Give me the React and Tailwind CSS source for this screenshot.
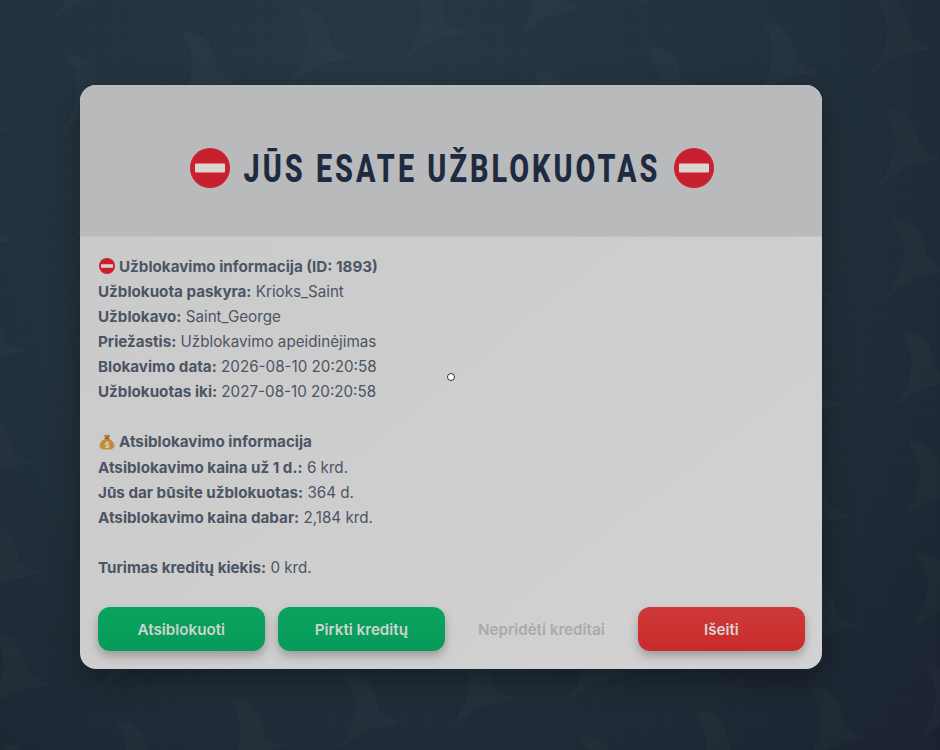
import React from 'react';

const NoEntry = ({ className }) => (
  <svg className={className} viewBox="0 0 40 40">
    <circle cx="20" cy="20" r="20" fill="#c9202f" />
    <rect x="5" y="15.5" width="30" height="9" rx="1" fill="#d9d6d2" />
  </svg>
);

const MoneyBag = ({ className }) => (
  <svg className={className} viewBox="0 0 16 16">
    <path d="M5 .8c1 .6 1.600.2 3 .2s2-.5 3-.2L9.800 4.400H6.200z" fill="#a9743a" />
    <path d="M6 4.400h4c3 1.800 5.500 4.600 5.500 7 0 2.900-2.900 4.200-7.500 4.200S.5 14.300.5 11.400c0-2.400 2.500-5.200 5.500-7z" fill="#c08a40" />
    <rect x="6" y="3.900" width="4" height="1" fill="#7d5326" />
    <text x="8" y="13.500" textAnchor="middle" fontSize="8.500" fontWeight="700" fontFamily="Liberation Sans" fill="#ecd9a4">$</text>
  </svg>
);

// fin pattern sits on a skewed lattice
const fins = [];
for (let a = -2; a < 9; a++) {
  for (let b = -8; b < 9; b++) {
    const x = 761 + b * 114.5 + a * 8;
    const y = 22 + b * -24 + a * 111;
    if (x > -70 && x < 950 && y > -90 && y < 760) fins.push([x, y]);
  }
}

const Row = ({ label, value }) => (
  <div>
    <span className="font-bold">{label}</span> {value}
  </div>
);

const greenBtn = 'h-[44px] pt-[2px] rounded-xl bg-gradient-to-b from-[#0aa360] to-[#079a58] text-[#d0d3d0] shadow-[0_5px_10px_rgba(0,0,0,0.25)]';

const App = () => {
  return (
    <div className="relative w-full h-[750px] overflow-hidden bg-[radial-gradient(ellipse_at_40%_15%,#283b46_0%,#24333f_50%,#1b2431_100%)] pt-[85px] pl-[80px] font-['Inter',sans-serif]">
      {/* background fins */}
      <svg className="absolute inset-0 w-full h-full" viewBox="0 0 940 750">
        {fins.map(([x, y], i) => (
          <path
            key={i}
            d="M0 0C14 -2 32 4 36 38C42 44 52 48 58 50L30 56C16 60 4 70 -7 79C8 60 16 36 10 20C8 12 4 6 0 0Z"
            fill="#ffffff"
            opacity="0.018"
            transform={`translate(${x} ${y})`}
          />
        ))}
      </svg>
      {/* woven texture */}
      <div className="absolute inset-0 bg-[repeating-linear-gradient(0deg,rgba(0,0,0,0.05)_0_1px,transparent_1px_3px),repeating-linear-gradient(90deg,rgba(0,0,0,0.05)_0_1px,transparent_1px_3px)]" />

      <div className="relative w-[742px] h-[584px] rounded-2xl overflow-hidden bg-gradient-to-br from-[#c9c9ca] to-[#d2d2d3] shadow-[0_10px_30px_rgba(0,0,0,0.35)] flex flex-col">
        <div className="h-[152px] bg-[#b9babc] border-b border-[#c3c4c5] flex items-center pl-[110px] shrink-0 pt-[14px]">
          <NoEntry className="w-10 h-10 shrink-0" />
          <div className="w-[444px] flex justify-center shrink-0">
            <h1 className="whitespace-nowrap scale-x-[0.758] font-['Roboto',sans-serif] font-extrabold text-[38px] leading-none tracking-[4px] text-[#1d2a3f] pt-[2px]">
              JŪS ESATE UŽBLOKUOTAS
            </h1>
          </div>
          <NoEntry className="w-10 h-10 shrink-0" />
        </div>

        <div className="flex-1 px-[18px] pt-[16.9px] text-[15.2px] leading-[25.08px] text-[#4b5563]">
          <div className="font-bold flex items-center gap-[4px]">
            <NoEntry className="w-4 h-4 ml-[1px]" />
            <span>Užblokavimo informacija (ID: 1893)</span>
          </div>
          <Row label="Užblokuota paskyra:" value="Krioks_Saint" />
          <Row label="Užblokavo:" value="Saint_George" />
          <Row label="Priežastis:" value="Užblokavimo apeidinėjimas" />
          <Row label="Blokavimo data:" value="2026-08-10 20:20:58" />
          <Row label="Užblokuotas iki:" value="2027-08-10 20:20:58" />

          <div className="font-bold flex items-center gap-[4px] mt-[25.08px]">
            <MoneyBag className="w-4 h-4 ml-[1px]" />
            <span>Atsiblokavimo informacija</span>
          </div>
          <Row label="Atsiblokavimo kaina už 1 d.:" value="6 krd." />
          <Row label="Jūs dar būsite užblokuotas:" value="364 d." />
          <Row label="Atsiblokavimo kaina dabar:" value="2,184 krd." />

          <div className="mt-[25.08px]">
            <Row label="Turimas kreditų kiekis:" value="0 krd." />
          </div>
        </div>

        <div className="grid grid-cols-4 gap-[13.3px] pl-[18px] pr-[17.3px] pb-[18px] text-[15.2px] font-semibold">
          <button className={greenBtn}>Atsiblokuoti</button>
          <button className={greenBtn}>Pirkti kreditų</button>
          <button className="h-[44px] pt-[2px] text-[#a9aaad]">Nepridėti kreditai</button>
          <button className="h-[44px] pt-[2px] rounded-xl bg-gradient-to-b from-[#cf3a3a] to-[#c92a2a] text-[#dcd2d2] shadow-[0_5px_10px_rgba(0,0,0,0.25)]">
            Išeiti
          </button>
        </div>

        {/* mouse pointer dot */}
        <div className="absolute left-[367px] top-[288px] w-2 h-2 rounded-full bg-white border border-[#333]" />
      </div>
    </div>
  );
};

export default App;
